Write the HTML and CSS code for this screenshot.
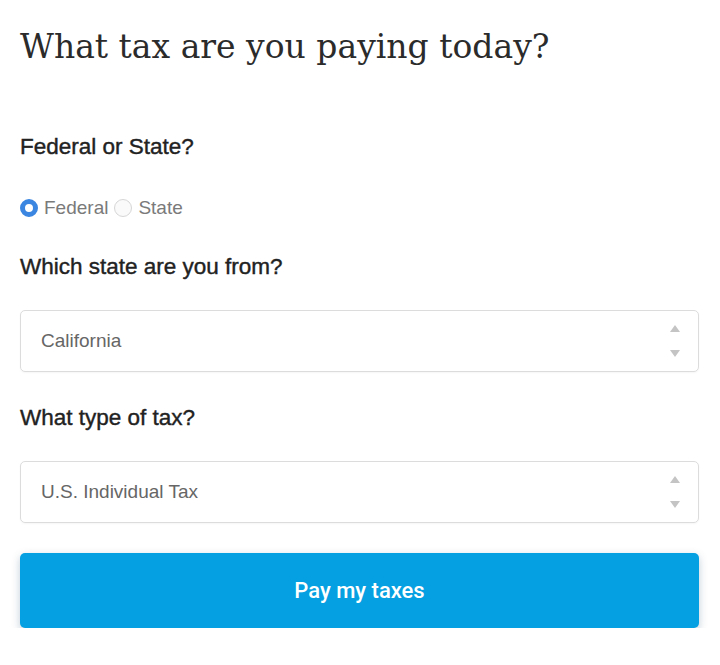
FILE: index.html
```html
<!DOCTYPE html>
<html lang="en">
<head>
  <meta charset="UTF-8">
  <meta name="viewport" content="width=device-width, initial-scale=1.0">
  <title>Pay my taxes</title>
  <link rel="stylesheet" href="styles.css">
</head>
<body>

  <div class="tax-form">
    <h1 class="page-title">What tax are you paying today?</h1>

    <!-- Loai thue -->
    <div class="field">
      <div class="field-label">Federal or State?</div>
      <div class="radio-row">
        <label class="radio-option">
          <input type="radio" name="level" value="federal" checked>
          <span>Federal</span>
        </label>
        <label class="radio-option">
          <input type="radio" name="level" value="state">
          <span>State</span>
        </label>
      </div>
    </div>

    <div class="field">
      <div class="field-label">Which state are you from?</div>
      <div class="select-box">
        <span class="select-value">California</span>
        <span class="select-arrows"><span class="arrow-up"></span><span class="arrow-down"></span></span>
      </div>
    </div>

    <div class="field">
      <div class="field-label">What type of tax?</div>
      <div class="select-box">
        <span class="select-value">U.S. Individual Tax</span>
        <span class="select-arrows"><span class="arrow-up"></span><span class="arrow-down"></span></span>
      </div>
    </div>

    <button class="pay-button">Pay my taxes</button>
  </div>

</body>
</html>
```

FILE: styles.css
```css
body {
  margin: 0;
  background: #fff;
  font-family: "Liberation Sans", Arial, sans-serif;
}

.tax-form {
  padding: 22px 21px 0 20px;
}

.page-title {
  margin: 0 0 62px;
  font-family: "DejaVu Serif", serif;
  font-weight: normal;
  font-size: 33px;
  line-height: 50px;
  color: #2b2b2b;
}

.field {
  margin-bottom: 33px;
}

.field:last-of-type {
  margin-bottom: 0;
}

.field-label {
  font-size: 22.5px;
  color: #222;
  line-height: 26px;
  -webkit-text-stroke: 0.4px #222;
}

.radio-row {
  display: flex;
  gap: 6px;
  margin-top: 37px;
  padding-bottom: 2px;
}

.radio-option {
  display: flex;
  align-items: center;
  gap: 6px;
  font-size: 19px;
  color: #7a7a7a;
}

.radio-option input {
  appearance: none;
  margin: 0;
  width: 18px;
  height: 18px;
  border-radius: 50%;
  border: 1px solid #d6d6d6;
  background: #fafafa;
}

.radio-option input:checked {
  border: 5px solid #3a86e0;
  background: #fff;
}

.select-box {
  display: flex;
  align-items: center;
  justify-content: space-between;
  height: 60px;
  margin-top: 30px;
  padding: 0 18px 0 20px;
  border: 1px solid #dcdcdc;
  border-radius: 5px;
  box-shadow: 0 1px 2px rgba(0, 0, 0, 0.04);
}

.select-value {
  font-size: 19px;
  color: #666;
}

.select-arrows {
  display: flex;
  flex-direction: column;
  gap: 18px;
}

.arrow-up,
.arrow-down {
  width: 0;
  height: 0;
  border-left: 5px solid transparent;
  border-right: 5px solid transparent;
}

.arrow-up {
  border-bottom: 7px solid #c4c4c4;
}

.arrow-down {
  border-top: 7px solid #c4c4c4;
}

.pay-button {
  display: block;
  width: 100%;
  height: 75px;
  margin-top: 30px;
  border: none;
  border-radius: 5px;
  background: #05a0e1;
  color: #fff;
  font-family: Roboto, "Liberation Sans", sans-serif;
  font-size: 22px;
  font-weight: 500;
  box-shadow: 0 3px 8px rgba(0, 60, 100, 0.25);
}
```
